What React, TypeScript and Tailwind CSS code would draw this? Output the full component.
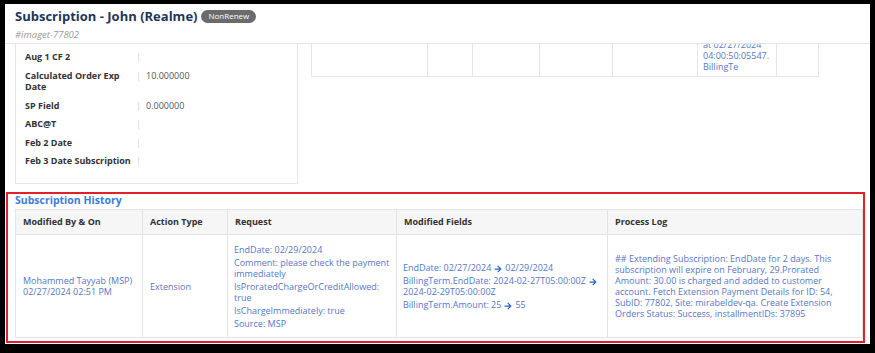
import { FaArrowRight } from "react-icons/fa";

// ─── constants ────────────────────────────────────────────────────────────────
const FONT = { fontFamily: "'Open Sans', 'Liberation Sans', sans-serif" };

const details = [
  { label: ["Aug 1 CF 2"], value: "" },
  { label: ["Calculated Order Exp", "Date"], value: "10.000000" },
  { label: ["SP Field"], value: "0.000000" },
  { label: ["ABC@T"], value: "" },
  { label: ["Feb 2 Date"], value: "" },
  { label: ["Feb 3 Date Subscription"], value: "" },
];

const topCols = [116, 45, 67, 73, 85, 79, 42];

const requestItems = [
  ["EndDate: 02/29/2024"],
  ["Comment: please check the payment", "immediately"],
  ["IsProratedChargeOrCreditAllowed:", "true"],
  ["IsChargeImmediately: true"],
  ["Source: MSP"],
];

const processLog = [
  "## Extending Subscription: EndDate for 2 days. This",
  "subscription will expire on February, 29.Prorated",
  "Amount: 30.00 is charged and added to customer",
  "account. Fetch Extension Payment Details for ID: 54,",
  "SubID: 77802, Site: mirabeldev-qa. Create Extension",
  "Orders Status: Success, installmentIDs: 37895",
];

function Arrow() {
  return <FaArrowRight className="mx-[3px] inline-block text-[#2a62c9]" size={8} />;
}

// ─── component ────────────────────────────────────────────────────────────────
export default function App() {
  return (
    <div className="h-[353px] w-[875px] bg-black pb-[9px] pl-[5px] pr-[5px] pt-[4px]" style={FONT}>
      <div className="flex h-full flex-col bg-white">
        {/* ── Header ─────────────────────────────────────────────── */}
        <div className="border-b border-[#e3e3e3] px-[10px] pb-[2px] pt-[3px]">
          <div className="flex items-center">
            <h1 className="text-[13px] font-bold leading-[18px] text-[#1e3558]">
              Subscription - John (Realme)
            </h1>
            <span className="ml-[4px] flex h-[13px] items-center rounded-full bg-[#6b6b6b] px-[7px] text-[8px] leading-none text-white">
              NonRenew
            </span>
          </div>
          <p className="mt-[4px] text-[9.5px] italic leading-[12px] text-[#9a9a9a]">#imaget-77802</p>
        </div>

        {/* ── Details card + scrolled table ──────────────────────── */}
        <div className="flex items-start pl-[10px]">
          <div className="w-[283px] border-x border-b border-[#e6e6e6] pb-[13px] pt-[3.5px]">
            {details.map(({ label, value }) => (
              <div key={label.join(" ")} className="flex py-[3.5px] text-[9px] leading-[11.5px]">
                <div className="w-[117px] pl-[9px] font-bold text-[#333]">
                  {label.map((l) => (
                    <div key={l} className="whitespace-nowrap">{l}</div>
                  ))}
                </div>
                <span className="w-[13px] pl-[3px] text-[#cfcfcf]">|</span>
                <span className="text-[#555]">{value}</span>
              </div>
            ))}
          </div>

          <div className="ml-[13px] flex h-[33px] flex-col justify-end overflow-hidden">
            <div className="flex border-b border-l border-[#e6e6e6]">
              {topCols.map((w, i) => (
                <div
                  key={i}
                  className="border-r border-[#e6e6e6] pb-[4px] pl-[5px] text-[9px] leading-[11px] text-[#5677c6]"
                  style={{ width: w }}
                >
                  {i === 5 && (
                    <>
                      <div className="whitespace-nowrap">Extended by</div>
                      <div className="whitespace-nowrap">at 02/27/2024</div>
                      <div className="whitespace-nowrap">04:00:50:05547.</div>
                      <div className="whitespace-nowrap">BillingTe</div>
                    </>
                  )}
                </div>
              ))}
            </div>
          </div>
        </div>

        {/* ── Subscription History ───────────────────────────────── */}
        <section className="ml-[1px] mt-[8px] w-[859px] border-2 border-[#e3202a] pb-[3px] pl-[7px]">
          <h2 className="text-[10.5px] font-bold leading-[12px] text-[#3b7dd8]">Subscription History</h2>

          <div className="mt-[3px] grid grid-cols-[127px_85px_169px_211px_255px] border-l border-t border-[#e3e3e3] text-[9px]">
            {["Modified By & On", "Action Type", "Request", "Modified Fields", "Process Log"].map((h) => (
              <div
                key={h}
                className="flex h-[25px] items-center border-b border-r border-[#e3e3e3] bg-[#f6f6f6] pl-[7px] font-bold text-[#333]"
              >
                {h}
              </div>
            ))}

            {/* body row */}
            <div className="flex h-[103px] flex-col justify-center border-b border-r border-[#e3e3e3] pl-[7px] leading-[11px] text-[#5677c6]">
              <div>Mohammed Tayyab (MSP)</div>
              <div>02/27/2024 02:51 PM</div>
            </div>
            <div className="flex h-[103px] flex-col justify-center border-b border-r border-[#e3e3e3] pl-[7px] leading-[11px] text-[#5677c6]">
              Extension
            </div>
            <div className="flex h-[103px] flex-col justify-center gap-[2px] border-b border-r border-[#e3e3e3] pl-[6px] leading-[11px] text-[#5677c6]">
              {requestItems.map((lines) => (
                <div key={lines[0]}>
                  {lines.map((l) => (
                    <div key={l} className="whitespace-nowrap">{l}</div>
                  ))}
                </div>
              ))}
            </div>
            <div className="flex h-[103px] flex-col justify-center gap-[2px] border-b border-r border-[#e3e3e3] pl-[6px] leading-[11px] text-[#5677c6]">
              <div className="whitespace-nowrap">
                EndDate: 02/27/2024
                <Arrow />
                02/29/2024
              </div>
              <div>
                <div className="whitespace-nowrap">
                  BillingTerm.EndDate: 2024-02-27T05:00:00Z
                  <Arrow />
                </div>
                <div className="whitespace-nowrap">2024-02-29T05:00:00Z</div>
              </div>
              <div className="whitespace-nowrap">
                BillingTerm.Amount: 25
                <Arrow />
                55
              </div>
            </div>
            <div className="flex h-[103px] flex-col justify-center border-b border-r border-[#e3e3e3] pl-[7px] leading-[11px] text-[#5677c6]">
              {processLog.map((l) => (
                <div key={l} className="whitespace-nowrap">{l}</div>
              ))}
            </div>
          </div>
        </section>
      </div>
    </div>
  );
}
